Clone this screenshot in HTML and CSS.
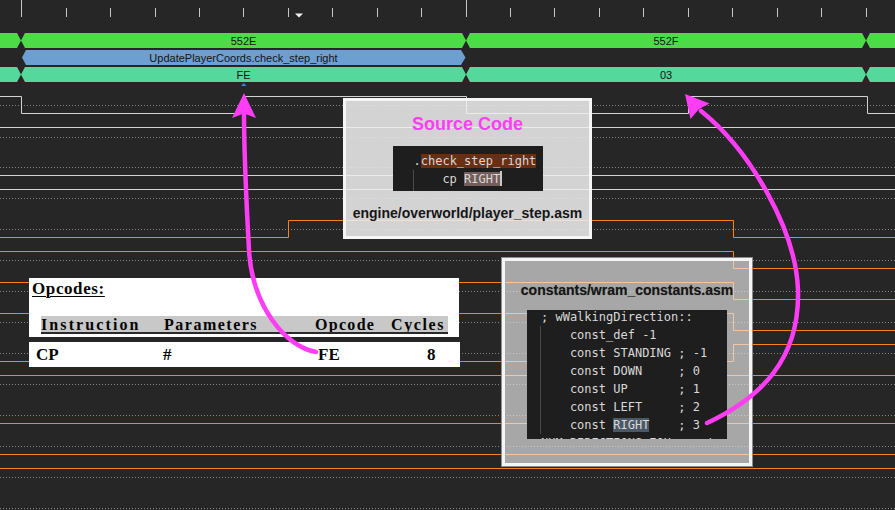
FILE: index.html
```html
<!DOCTYPE html>
<html lang="en">
<head>
<meta charset="utf-8">
<title>Waveform – check_step_right</title>
<link rel="stylesheet" href="styles.css">
</head>
<body>
<div class="viewer">
  <svg class="wave" width="895" height="510" viewBox="0 0 895 510">
    <g class="ticks">
      <line class="tick" x1="21.5" y1="0" x2="21.5" y2="17"/>
      <line class="tick" x1="66.5" y1="8" x2="66.5" y2="17"/>
      <line class="tick" x1="110.5" y1="8" x2="110.5" y2="17"/>
      <line class="tick" x1="155.5" y1="8" x2="155.5" y2="17"/>
      <line class="tick" x1="199.5" y1="8" x2="199.5" y2="17"/>
      <line class="tick" x1="243.5" y1="8" x2="243.5" y2="17"/>
      <line class="tick" x1="288.5" y1="8" x2="288.5" y2="17"/>
      <line class="tick" x1="332.5" y1="8" x2="332.5" y2="17"/>
      <line class="tick" x1="377.5" y1="8" x2="377.5" y2="17"/>
      <line class="tick" x1="421.5" y1="8" x2="421.5" y2="17"/>
      <line class="tick" x1="466.5" y1="0" x2="466.5" y2="17"/>
      <line class="tick" x1="510.5" y1="8" x2="510.5" y2="17"/>
      <line class="tick" x1="554.5" y1="8" x2="554.5" y2="17"/>
      <line class="tick" x1="599.5" y1="8" x2="599.5" y2="17"/>
      <line class="tick" x1="643.5" y1="8" x2="643.5" y2="17"/>
      <line class="tick" x1="688.5" y1="8" x2="688.5" y2="17"/>
      <line class="tick" x1="732.5" y1="8" x2="732.5" y2="17"/>
      <line class="tick" x1="777.5" y1="8" x2="777.5" y2="17"/>
      <line class="tick" x1="821.5" y1="8" x2="821.5" y2="17"/>
      <line class="tick" x1="866.5" y1="8" x2="866.5" y2="17"/>
      <polygon class="cursor-mark" points="295,13.5 303,13.5 299,17.5"/>
    </g>

    <g class="bus">
      <polygon class="bus-addr" points="-6,33 17,33 21,40.5 17,48 -6,48"/>
      <polygon class="bus-addr" points="21,40.5 25,33 462,33 466,40.5 462,48 25,48"/>
      <polygon class="bus-addr" points="466,40.5 470,33 862,33 866,40.5 862,48 470,48"/>
      <polygon class="bus-addr" points="866,40.5 870,33 900,33 900,48 870,48"/>
      <text class="bus-label" x="243.5" y="41">552E</text>
      <text class="bus-label" x="666" y="41">552F</text>

      <polygon class="bus-sym" points="22,57.5 26,50 461,50 465.5,57.5 461,65 26,65"/>
      <text class="bus-label" x="243.5" y="58">UpdatePlayerCoords.check_step_right</text>

      <polygon class="bus-data" points="-6,67 17,67 21,74.5 17,82 -6,82"/>
      <polygon class="bus-data" points="21,74.5 25,67 462,67 466,74.5 462,82 25,82"/>
      <polygon class="bus-data" points="466,74.5 470,67 862,67 866,74.5 862,82 470,82"/>
      <polygon class="bus-data" points="866,74.5 870,67 900,67 900,82 870,82"/>
      <text class="bus-label" x="243.5" y="75">FE</text>
      <text class="bus-label" x="666" y="75">03</text>

      <polygon class="marker" points="241,86 246.5,86 243.7,83"/>
    </g>

    <g class="refs">
      <line class="ref" x1="0" y1="105.5" x2="895" y2="105.5"/>
      <line class="ref" x1="0" y1="137.5" x2="895" y2="137.5"/>
      <line class="ref" x1="0" y1="167.5" x2="895" y2="167.5"/>
      <line class="ref" x1="0" y1="198.5" x2="895" y2="198.5"/>
      <line class="ref" x1="0" y1="229.5" x2="895" y2="229.5"/>
      <line class="ref" x1="0" y1="260.5" x2="895" y2="260.5"/>
      <line class="ref" x1="0" y1="291.5" x2="895" y2="291.5"/>
      <line class="ref" x1="0" y1="322.5" x2="895" y2="322.5"/>
      <line class="ref" x1="0" y1="353.5" x2="895" y2="353.5"/>
      <line class="ref" x1="0" y1="384.5" x2="895" y2="384.5"/>
      <line class="ref" x1="0" y1="415.5" x2="895" y2="415.5"/>
      <line class="ref" x1="0" y1="446.5" x2="895" y2="446.5"/>
      <line class="ref" x1="0" y1="477.5" x2="895" y2="477.5"/>
      <line class="ref" x1="0" y1="508.5" x2="895" y2="508.5"/>
    </g>

    <g class="signals">
      <path class="sig-w" d="M0 96.5 H21.5 V113.5 H243.5 V96.5 H466.5 V113.5 H688.5 V96.5 H867.5 V113.5 H895"/>
      <path class="sig-w" d="M0 127.5 H895"/>
      <path class="sig-w" d="M0 175.5 H895"/>
      <path class="sig-w" d="M0 189.5 H895"/>
      <path class="sig-o" d="M0 237.5 H288.5 V220.5 H733.5 V237.5 H895"/>
      <path class="sig-o" d="M0 251.5 H733.5 V268.5 H895"/>
      <path class="sig-o" d="M0 282.5 H733.5 V299.5 H895"/>
      <path class="sig-o" d="M0 313.5 H733.5 V330.5 H895"/>
      <path class="sig-o" d="M0 361.5 H733.5 V344.5 H895"/>
      <path class="sig-o" d="M0 375.5 H895"/>
      <path class="sig-o" d="M0 423.5 H895"/>
      <path class="sig-o" d="M0 454.5 H895"/>
      <path class="sig-o" d="M0 468.5 H895"/>
    </g>
  </svg>

  <section class="card card-source">
    <h2 class="card-title">Source Code</h2>
    <div class="code code-source">
      <div class="code-line">.<span class="hl-label">check_step_right</span></div>
      <div class="code-line guide">    cp <span class="hl-sel">RIGHT</span><span class="caret"></span></div>
    </div>
    <p class="file-name">engine/overworld/player_step.asm</p>
  </section>

  <section class="card card-constants">
    <p class="file-name file-name-shadow">constants/wram_constants.asm</p>
    <div class="code code-constants">
      <div class="code-line first">; wWalkingDirection::</div>
      <div class="indented">
        <div class="code-line">    const_def -1</div>
        <div class="code-line">    const STANDING ; -1</div>
        <div class="code-line">    const DOWN     ; 0</div>
        <div class="code-line">    const UP       ; 1</div>
        <div class="code-line">    const LEFT     ; 2</div>
        <div class="code-line">    const <span class="hl-ref">RIGHT</span>    ; 3</div>
      </div>
      <div class="code-line">NUM_DIRECTIONS EQU const_value</div>
    </div>
  </section>

  <div class="opcodes">
    <div class="op-head">
      <p class="op-title">Opcodes:</p>
      <div class="op-cols">
        <span class="c-ins">Instruction</span>
        <span class="c-par">Parameters</span>
        <span class="c-op">Opcode</span>
        <span class="c-cy">Cycles</span>
      </div>
    </div>
    <div class="op-row">
      <span>CP</span>
      <span>#</span>
      <span>FE</span>
      <span>8</span>
    </div>
  </div>

  <svg class="arrows" width="895" height="510" viewBox="0 0 895 510">
    <path class="arrow-line" d="M316 352 C285 347, 252 305, 249 250 C246 195, 244 150, 244 114"/>
    <polygon class="arrow-head" points="244,93 232,118 244,113.5 256,118"/>
    <path class="arrow-line" d="M707 423 C760 398, 800 360, 798 290 C796 230, 750 150, 701 111"/>
    <polygon class="arrow-head" points="685,94 690.5,119 699,109 709.5,103.5"/>
  </svg>
</div>
</body>
</html>
```

FILE: styles.css
```css
html, body {
  margin: 0;
  padding: 0;
  background: #262626;
}

body {
  font-family: "Liberation Sans", Arial, sans-serif;
  overflow: hidden;
}

.viewer {
  position: relative;
  width: 895px;
  height: 510px;
  overflow: hidden;
  background: #262626;
}

.wave {
  display: block;
}

/* timeline ticks */
.tick {
  stroke: #c6c6c6;
  stroke-width: 1;
}

.cursor-mark {
  fill: #f2f2f2;
}

/* buses */
.bus-addr { fill: #4edb48; }
.bus-sym  { fill: #6d9fd3; }
.bus-data { fill: #54d89b; }

.bus-label {
  font-family: "Liberation Sans", Arial, sans-serif;
  font-size: 11px;
  fill: #141414;
  text-anchor: middle;
  dominant-baseline: central;
}

.marker {
  fill: #2f86e6;
}

/* dotted reference lines */
.ref {
  stroke: #858585;
  stroke-width: 1;
  stroke-dasharray: 1 2;
}

/* signals */
.sig-w {
  fill: none;
  stroke: #d2d2d2;
  stroke-width: 1;
}

.sig-o {
  fill: none;
  stroke: #f7821f;
  stroke-width: 1;
}

/* overlay cards */
.card {
  position: absolute;
  box-sizing: border-box;
  border: 3px solid #f5f5f5;
  display: flex;
  flex-direction: column;
  align-items: center;
}

.card-source {
  left: 343px;
  top: 98px;
  width: 249px;
  height: 141px;
  padding-top: 12px;
  background: rgba(240, 240, 240, 0.86);
}

.card-constants {
  left: 502px;
  top: 258px;
  width: 250px;
  height: 208px;
  padding-top: 20px;
  background: rgba(237, 237, 237, 0.65);
  box-shadow: 0 0 0 1px #8c8c8c;
}

.card-title {
  margin: 0;
  font-family: "Liberation Sans", Arial, sans-serif;
  font-weight: bold;
  font-size: 18px;
  line-height: 22px;
  color: #ff3df5;
}

.file-name {
  margin: 0;
  font-family: "Liberation Sans", Arial, sans-serif;
  font-weight: bold;
  font-size: 14px;
  line-height: 18px;
  color: #161616;
  white-space: nowrap;
}

.card-source .file-name {
  margin-top: 13px;
}

.file-name-shadow {
  text-shadow: 0 0 1px rgba(0, 0, 0, 0.35);
}

/* code blocks */
.code {
  box-sizing: border-box;
  background: #1e1e1e;
  font-family: "DejaVu Sans Mono", "Liberation Mono", monospace;
  font-size: 12px;
  color: #d8d8d8;
  overflow: hidden;
}

.code-line {
  line-height: 18px;
  height: 18px;
  white-space: pre;
}

.code-source {
  margin-top: 11px;
  width: 150px;
  height: 45px;
  padding: 6px 0 0 21px;
}

.code-source .guide {
  border-left: 1px solid #4a4a4a;
  margin-left: -1px;
  height: 21px;
}

.hl-label {
  background: #6a2f12;
}

.hl-sel {
  background: #735e5b;
}

.caret {
  display: inline-block;
  width: 2px;
  height: 15px;
  background: #c9c9c9;
  vertical-align: -3px;
}

.code-constants {
  margin-top: 11px;
  width: 200px;
  height: 129px;
  padding-left: 14px;
}

.code-constants .first {
  margin-top: -2px;
}

.indented {
  border-left: 1px solid #474747;
  margin-left: -1px;
}

.hl-ref {
  background: #4b5966;
}

/* opcode table screenshot */
.opcodes {
  position: absolute;
  left: 29px;
  top: 278px;
  width: 431px;
  display: flex;
  flex-direction: column;
  gap: 5px;
  font-family: "Liberation Serif", "Times New Roman", serif;
  font-weight: bold;
  color: #050505;
}

.op-head {
  box-sizing: border-box;
  height: 59px;
  width: 430px;
  background: #ffffff;
  padding: 2px 0 0 3px;
}

.op-title {
  margin: 0;
  font-size: 17px;
  line-height: 17px;
  letter-spacing: 0.6px;
  text-decoration: underline;
  text-decoration-thickness: 1px;
  text-underline-offset: 2px;
}

.op-cols {
  margin: 19px 0 0 9px;
  width: 407px;
  height: 16px;
  display: grid;
  grid-template-columns: 123px 151px 76px 57px;
  background: #c8c8c8;
  border-bottom: 2px solid #2a2a2a;
  font-size: 16px;
  line-height: 17px;
  white-space: nowrap;
  overflow: hidden;
}

.c-ins { letter-spacing: 2.1px; }
.c-par { letter-spacing: 1.5px; }
.c-op  { letter-spacing: 1.3px; }
.c-cy  { letter-spacing: 1.6px; }

.op-row {
  box-sizing: border-box;
  height: 25px;
  width: 431px;
  background: #ffffff;
  padding-left: 7px;
  display: grid;
  grid-template-columns: 127px 155px 109px auto;
  align-items: center;
  font-size: 17px;
  line-height: 25px;
}

/* annotation arrows */
.arrows {
  position: absolute;
  left: 0;
  top: 0;
  pointer-events: none;
}

.arrow-line {
  fill: none;
  stroke: #ff3df5;
  stroke-width: 4.5;
  stroke-linecap: round;
}

.arrow-head {
  fill: #ff3df5;
}
```
